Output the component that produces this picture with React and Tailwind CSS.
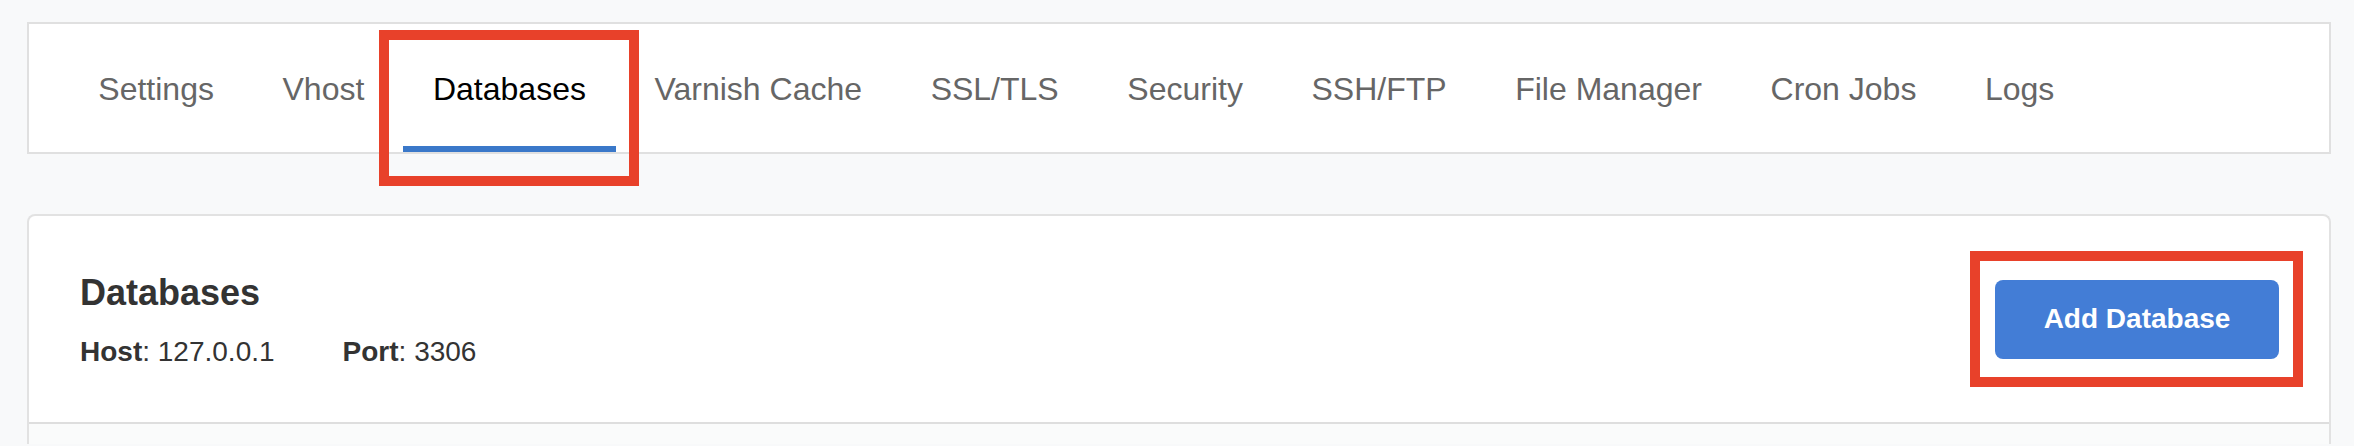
const TABS = ["Settings", "Vhost", "Databases", "Varnish Cache", "SSL/TLS", "Security", "SSH/FTP", "File Manager", "Cron Jobs", "Logs"];

function Tab({ label, active }) {
  return (
    <div
      className={`mx-[4.3px] border-b-[6px] px-[30px] pt-[49px] pb-[41px] text-[32px] leading-[32px] ${
        active ? "border-[#3a78c9] text-black" : "border-transparent text-[#666666]"
      }`}
    >
      {label}
    </div>
  );
}

export default function App() {
  return (
    <div className="relative h-[446px] overflow-hidden bg-[#f8f9fa] pt-[22px] pl-[27px] font-['Liberation_Sans',Arial,sans-serif]">
      <nav className="flex w-[2304px] border-2 border-[#e0e0e0] bg-white px-[35px]">
        {TABS.map((t) => (
          <Tab key={t} label={t} active={t === "Databases"} />
        ))}
      </nav>

      <section className="mt-[60px] w-[2304px] overflow-hidden rounded-t-[8px] border-2 border-b-0 border-[#e2e2e2] bg-white">
        <div className="flex h-[208px] items-center justify-between border-b-2 border-[#dedede] pr-[50px] pl-[51px]">
          <div className="pt-[4px] text-[#333333]">
            <h1 className="text-[36px] leading-[44px] font-bold">Databases</h1>
            <p className="mt-[17px] text-[28px] leading-[40px]">
              <span className="font-bold">Host</span>: 127.0.0.1
              <span className="ml-[68px] font-bold">Port</span>: 3306
            </p>
          </div>
          <button className="h-[79px] w-[284px] rounded-[8px] bg-[#437dd6] text-[28px] font-bold text-white">
            Add Database
          </button>
        </div>
        <div className="h-[20px] bg-[#fafbfb]" />
      </section>

      {/* annotation boxes */}
      <div className="absolute top-[30px] left-[379px] h-[156px] w-[260px] border-[10px] border-[#e8412a]" />
      <div className="absolute top-[251px] left-[1970px] h-[136px] w-[333px] border-[10px] border-[#e8412a]" />
    </div>
  );
}
